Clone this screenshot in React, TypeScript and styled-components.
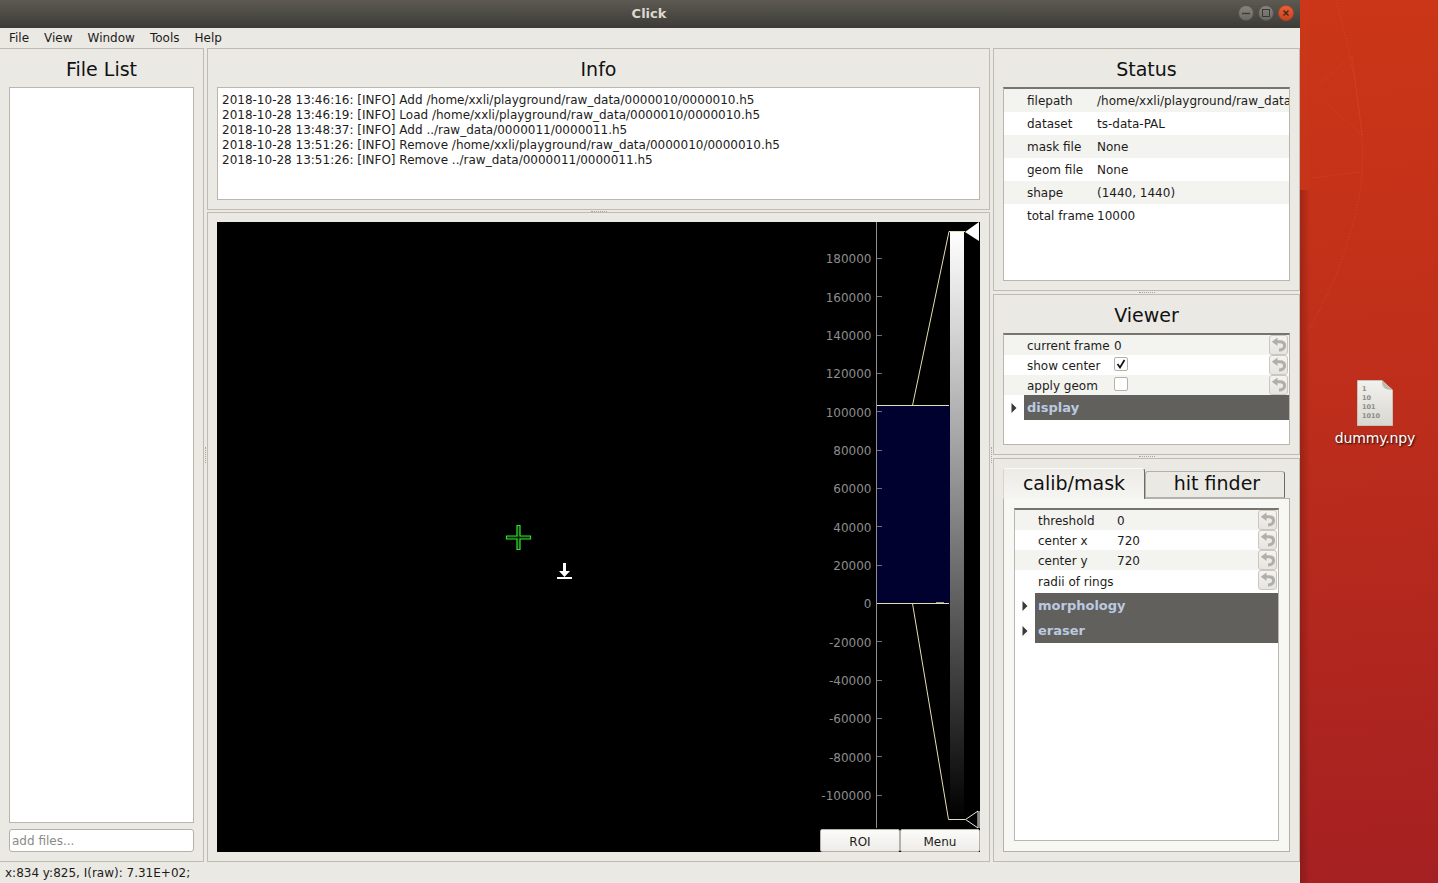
import React from 'react';
import styled, { createGlobalStyle } from 'styled-components';

const GlobalStyle = createGlobalStyle`
  html, body {
    margin: 0;
    padding: 0;
    overflow: hidden;
    font-family: "DejaVu Sans", sans-serif;
    font-size: 12px;
    color: #1d1c1a;
  }
  * { box-sizing: border-box; }
`;

const Page = styled.div`
  display: flex;
  width: 1438px;
  height: 883px;
  overflow: hidden;
  background: linear-gradient(176deg, #cd3816 0%, #c02f1a 45%, #a52022 100%);
`;

const AppWindow = styled.div`
  display: flex;
  flex-direction: column;
  flex: none;
  width: 1300px;
  height: 883px;
  background: #ebe9e4;
`;

const TitleBar = styled.div`
  display: flex;
  align-items: center;
  justify-content: flex-end;
  position: relative;
  flex: none;
  height: 28px;
  padding-right: 6px;
  gap: 4px;
  background: linear-gradient(#5c5a52, #3c3b37);
`;

const TitleText = styled.div`
  position: absolute;
  left: 0;
  right: 0;
  top: 5px;
  padding-right: 2px;
  text-align: center;
  font-size: 13px;
  line-height: 17px;
  font-weight: 700;
  color: #dcd8cf;
`;

const WindowButton = styled.div<{ close?: boolean }>`
  display: flex;
  align-items: center;
  justify-content: center;
  width: 16px;
  height: 16px;
  margin-top: -2px;
  border-radius: 50%;
  border: 1px solid ${({ close }) => (close ? '#b04722' : '#55544e')};
  background: ${({ close }) =>
    close ? 'linear-gradient(#e7623a, #c9421f)' : 'linear-gradient(#85847d, #6a6963)'};
`;

const MenuBar = styled.div`
  display: flex;
  align-items: center;
  flex: none;
  height: 20px;
  padding-left: 2px;
  gap: 1px;
`;

const MenuItem = styled.div`
  padding: 0 7px;
  line-height: 20px;
`;

const Main = styled.div`
  display: flex;
  flex: 1;
  min-height: 0;
`;

const Column = styled.div<{ width: number }>`
  display: flex;
  flex-direction: column;
  flex: none;
  width: ${({ width }) => width}px;
`;

const Dock = styled.div<{ height?: number; flush?: boolean }>`
  display: flex;
  flex-direction: column;
  flex: ${({ height }) => (height ? 'none' : '1')};
  height: ${({ height }) => (height ? `${height}px` : 'auto')};
  min-height: 0;
  padding: 0 9px 9px;
  border: 1px solid #bfbbb2;
  border-left-width: ${({ flush }) => (flush ? 0 : 1)}px;
`;

const DockTitle = styled.div`
  flex: none;
  height: 38px;
  font-size: 19px;
  line-height: 41px;
  text-align: center;
  color: #111;
`;

const FileList = styled.div`
  flex: 1;
  background: #fff;
  border: 1px solid #bab6ad;
`;

const AddFiles = styled.div`
  flex: none;
  height: 23px;
  margin-top: 6px;
  padding-left: 2px;
  line-height: 22px;
  color: #8a8a86;
  background: #fff;
  border: 1px solid #b5b1a8;
  border-radius: 3px;
`;

const LogBox = styled.div`
  flex: 1;
  padding: 5px 4px 0;
  line-height: 15px;
  white-space: pre;
  background: #fff;
  border: 1px solid #bab6ad;
`;

const HSplit = styled.div<{ thick?: boolean }>`
  display: flex;
  justify-content: center;
  align-items: center;
  flex: none;
  height: ${({ thick }) => (thick ? 3 : 2)}px;
`;

const HGrip = styled.div`
  width: 16px;
  border-top: 1px dotted #a8a49b;
`;

const VSplit = styled.div`
  display: flex;
  justify-content: center;
  align-items: center;
  flex: none;
  width: 3px;
`;

const VGrip = styled.div`
  height: 16px;
  border-left: 1px dotted #a8a49b;
`;

const PlotFrame = styled.div`
  position: relative;
  flex: 1;
  margin-top: 9px;
  background: #000;
`;

const PlotSvg = styled.svg`
  display: block;
  width: 763px;
  height: 630px;
`;

const PlotButtons = styled.div`
  display: flex;
  position: absolute;
  right: 0;
  bottom: 0;
`;

const PlotButton = styled.div`
  width: 80px;
  height: 23px;
  line-height: 24px;
  text-align: center;
  background: linear-gradient(#fbfbf9, #eeece8);
  border: 1px solid #b5b1a8;
  border-radius: 2px;
`;

const Tree = styled.div`
  display: flex;
  flex-direction: column;
  flex: 1;
  overflow: hidden;
  background: #fff;
  border: 1px solid #bab6ad;
  border-top: 2px solid #77756f;
`;

const Row = styled.div<{ alt?: boolean; height: number }>`
  display: flex;
  align-items: center;
  position: relative;
  flex: none;
  height: ${({ height }) => height}px;
  padding-left: 23px;
  padding-top: ${({ height }) => (height === 20 ? 1 : 0)}px;
  white-space: nowrap;
  background: ${({ alt }) => (alt ? '#f3f3f0' : '#fff')};
`;

const RowLabel = styled.span<{ width: number }>`
  flex: none;
  width: ${({ width }) => width}px;
`;

const Checkbox = styled.div`
  display: flex;
  align-items: center;
  justify-content: center;
  width: 14px;
  height: 14px;
  margin-top: -3px;
  background: #fff;
  border: 1px solid #b5b1a8;
  border-radius: 2px;
`;

const ResetButton = styled.div`
  display: flex;
  align-items: center;
  justify-content: center;
  position: absolute;
  right: 1px;
  top: 0;
  width: 19px;
  height: 20px;
  padding-bottom: 1px;
  background: linear-gradient(#f4f3f0, #e6e4df);
  border: 1px solid #cac7bf;
  border-radius: 3px;
`;

const GroupRow = styled.div`
  display: flex;
  align-items: center;
  flex: none;
  height: 25px;
`;

const ArrowCell = styled.div`
  display: flex;
  align-items: center;
  justify-content: center;
  flex: none;
  width: 20px;
`;

const GroupLabel = styled.div`
  flex: 1;
  height: 25px;
  padding-left: 3px;
  line-height: 26px;
  font-size: 13px;
  font-weight: 700;
  color: #bacae0;
  background: #62605d;
`;

const TabBar = styled.div`
  display: flex;
  flex: none;
  height: 30px;
  margin-top: 9px;
`;

const Tab = styled.div<{ active?: boolean }>`
  position: relative;
  z-index: ${({ active }) => (active ? 1 : 0)};
  flex: none;
  width: ${({ active }) => (active ? 142 : 140)}px;
  height: ${({ active }) => (active ? 31 : 27)}px;
  margin-top: ${({ active }) => (active ? 0 : 3)}px;
  padding-left: ${({ active }) => (active ? 0 : 4)}px;
  font-size: 19px;
  line-height: ${({ active }) => (active ? 29 : 23)}px;
  text-align: center;
  color: #111;
  background: ${({ active }) => (active ? 'linear-gradient(#edebe6, #f5f5f2)' : '#ebe9e4')};
  border: 1px solid #b5b1a8;
  border-right-color: #6d6b66;
  border-bottom: ${({ active }) => (active ? 'none' : '1px solid #b5b1a8')};
  border-radius: 3px 3px 0 0;
  border-left-color: ${({ active }) => (active ? '#d6d3cb' : '#b5b1a8')};
  border-top-color: ${({ active }) => (active ? '#fbfbf9' : '#b5b1a8')};
`;

const TabPane = styled.div`
  display: flex;
  flex: 1;
  flex-direction: column;
  padding: 9px 10px 10px;
  background: #f7f7f4;
  border: 1px solid #b5b1a8;
`;

const StatusBar = styled.div`
  flex: none;
  height: 21px;
  padding-left: 5px;
  line-height: 23px;
`;

const Desktop = styled.div`
  position: relative;
  flex: 1;
  overflow: hidden;
`;

const DesktopArt = styled.svg`
  position: absolute;
  left: 0;
  top: 0;
  width: 138px;
  height: 883px;
`;

const DesktopIcon = styled.div`
  display: flex;
  flex-direction: column;
  align-items: center;
  position: absolute;
  left: 12px;
  right: 0;
  top: 380px;
`;

const DesktopLabel = styled.div`
  margin-top: 3px;
  font-size: 14px;
  letter-spacing: -0.15px;
  line-height: 18px;
  color: #fff;
  text-shadow: 1px 1px 2px rgba(0, 0, 0, 0.85);
`;

const logLines = [
  '2018-10-28 13:46:16: [INFO] Add /home/xxli/playground/raw_data/0000010/0000010.h5',
  '2018-10-28 13:46:19: [INFO] Load /home/xxli/playground/raw_data/0000010/0000010.h5',
  '2018-10-28 13:48:37: [INFO] Add ../raw_data/0000011/0000011.h5',
  '2018-10-28 13:51:26: [INFO] Remove /home/xxli/playground/raw_data/0000010/0000010.h5',
  '2018-10-28 13:51:26: [INFO] Remove ../raw_data/0000011/0000011.h5',
];

const statusRows = [
  ['filepath', '/home/xxli/playground/raw_data'],
  ['dataset', 'ts-data-PAL'],
  ['mask file', 'None'],
  ['geom file', 'None'],
  ['shape', '(1440, 1440)'],
  ['total frame', '10000'],
];

const ticks = [
  180000, 160000, 140000, 120000, 100000, 80000, 60000, 40000, 20000, 0, -20000, -40000, -60000,
  -80000, -100000,
];

const ResetIcon = () => (
  <svg width="16" height="15" viewBox="0 0 16 15">
    <path
      d="M5 4.8 H9 C12 4.8 13.6 6.6 13.6 8.8 C13.6 11.2 11.4 13 8 13"
      fill="none"
      stroke="#b1afaa"
      strokeWidth="3"
    />
    <path d="M6.5 0.6 L0.8 4.8 L6.5 9 Z" fill="#b1afaa" />
  </svg>
);

const Arrow = () => (
  <svg width="6" height="10" viewBox="0 0 6 10">
    <path d="M0.5 0 L5.5 5 L0.5 10 Z" fill="#3a3936" />
  </svg>
);

const Group = ({ label }: { label: string }) => (
  <GroupRow>
    <ArrowCell>
      <Arrow />
    </ArrowCell>
    <GroupLabel>{label}</GroupLabel>
  </GroupRow>
);

const ParamRow = ({
  label,
  labelWidth,
  alt,
  height = 20,
  children,
}: {
  label: string;
  labelWidth: number;
  alt?: boolean;
  height?: number;
  children?: React.ReactNode;
}) => (
  <Row alt={alt} height={height}>
    <RowLabel width={labelWidth}>{label}</RowLabel>
    {children}
    <ResetButton>
      <ResetIcon />
    </ResetButton>
  </Row>
);

const Plot = () => {
  // the histogram is written in screen coordinates, the panel starts at 217,222
  const yOf = (v: number) => 603.5 - (v / 20000) * 38.33;
  return (
    <PlotFrame>
      <PlotSvg viewBox="217 222 763 630">
        <defs>
          <linearGradient id="lut" x1="0" y1="0" x2="0" y2="1">
            <stop offset="0" stopColor="#ffffff" />
            <stop offset="1" stopColor="#000000" />
          </linearGradient>
        </defs>
        <rect x={877} y={405} width={73} height={198} fill="#01012f" />
        <line x1={876.5} y1={222} x2={876.5} y2={828} stroke="#8f8f8f" />
        {ticks.map((v) => {
          const tickY = Math.floor(yOf(v)) + 0.5;
          return (
            <g key={v}>
              {v !== 0 && <line x1={877} x2={882} y1={tickY} y2={tickY} stroke="#6f6f6f" />}
              <text
                x={871.5}
                y={yOf(v) + 4.7}
                textAnchor="end"
                fontFamily="DejaVu Sans, sans-serif"
                fontSize="12"
                fill="#8d8d8d"
              >
                {v}
              </text>
            </g>
          );
        })}
        <rect x={950} y={232} width={14} height={588} fill="url(#lut)" />
        <g stroke="#e4dfae" fill="none">
          <path d="M877 405.5 H949" />
          <path d="M877 603.5 H949" />
          <path d="M912.5 405.5 L949 231.5 H965" />
          <path d="M912.5 603.5 L948.5 819.5 H965" />
        </g>
        <line x1={936} x2={944} y1={602.5} y2={602.5} stroke="#9a9a90" />
        <path d="M965 232 L979 222 V241 Z" fill="#fff" />
        <path d="M965.5 819.5 L978 811 V828 Z" fill="#000" stroke="#e8e8e8" />
        <rect x={978} y={811} width={2} height={17} fill="#8a8a8a" />
        <path
          d="M506.5 536 H517 V525.5 H520 V536 H530.5 V539 H520 V549.5 H517 V539 H506.5 Z"
          fill="#0a2a0a"
          stroke="#2ee62e"
          strokeWidth="1.2"
        />
        <rect x={563} y={563} width={3} height={9} fill="#fff" />
        <path d="M559 571 H570 L564.5 577 Z" fill="#fff" />
        <rect x={557} y={577} width={15} height={2} fill="#fff" />
      </PlotSvg>
      <PlotButtons>
        <PlotButton>ROI</PlotButton>
        <PlotButton>Menu</PlotButton>
      </PlotButtons>
    </PlotFrame>
  );
};

const App = () => (
  <Page>
    <GlobalStyle />
    <AppWindow>
      <TitleBar>
        <TitleText>Click</TitleText>
        <WindowButton>
          <svg width="10" height="10" viewBox="0 0 10 10">
            <path d="M1 5.5 H9" stroke="#3a3935" strokeWidth="1.3" />
          </svg>
        </WindowButton>
        <WindowButton>
          <svg width="10" height="10" viewBox="0 0 10 10">
            <rect x="1.5" y="1.5" width="7" height="7" fill="none" stroke="#3a3935" />
          </svg>
        </WindowButton>
        <WindowButton close>
          <svg width="10" height="10" viewBox="0 0 10 10">
            <path d="M2.5 2.5 L7.5 7.5 M7.5 2.5 L2.5 7.5" stroke="#4a2216" strokeWidth="1.4" />
          </svg>
        </WindowButton>
      </TitleBar>
      <MenuBar>
        {['File', 'View', 'Window', 'Tools', 'Help'].map((item) => (
          <MenuItem key={item}>{item}</MenuItem>
        ))}
      </MenuBar>
      <Main>
        <Column width={204}>
          <Dock flush>
            <DockTitle>File List</DockTitle>
            <FileList />
            <AddFiles>add files...</AddFiles>
          </Dock>
        </Column>
        <VSplit>
          <VGrip />
        </VSplit>
        <Column width={783}>
          <Dock height={162}>
            <DockTitle>Info</DockTitle>
            <LogBox>{logLines.join('\n')}</LogBox>
          </Dock>
          <HSplit>
            <HGrip />
          </HSplit>
          <Dock>
            <Plot />
          </Dock>
        </Column>
        <VSplit>
          <VGrip />
        </VSplit>
        <Column width={307}>
          <Dock height={243}>
            <DockTitle>Status</DockTitle>
            <Tree>
              {statusRows.map(([label, value], i) => (
                <Row key={label} alt={i % 2 === 0} height={23}>
                  <RowLabel width={70}>{label}</RowLabel>
                  <span>{value}</span>
                </Row>
              ))}
            </Tree>
          </Dock>
          <HSplit thick>
            <HGrip />
          </HSplit>
          <Dock height={161}>
            <DockTitle>Viewer</DockTitle>
            <Tree>
              <ParamRow alt label="current frame" labelWidth={87}>
                <span>0</span>
              </ParamRow>
              <ParamRow label="show center" labelWidth={87}>
                <Checkbox>
                  <svg width="10" height="10" viewBox="0 0 10 10">
                    <path d="M1.5 5 L4 8.5 L8.5 1" fill="none" stroke="#111" strokeWidth="1.7" />
                  </svg>
                </Checkbox>
              </ParamRow>
              <ParamRow alt label="apply geom" labelWidth={87}>
                <Checkbox />
              </ParamRow>
              <Group label="display" />
            </Tree>
          </Dock>
          <HSplit thick>
            <HGrip />
          </HSplit>
          <Dock>
            <TabBar>
              <Tab active>calib/mask</Tab>
              <Tab>hit finder</Tab>
            </TabBar>
            <TabPane>
              <Tree>
                <ParamRow alt label="threshold" labelWidth={79}>
                  <span>0</span>
                </ParamRow>
                <ParamRow label="center x" labelWidth={79}>
                  <span>720</span>
                </ParamRow>
                <ParamRow alt label="center y" labelWidth={79}>
                  <span>720</span>
                </ParamRow>
                <ParamRow label="radii of rings" labelWidth={79} height={23} />
                <Group label="morphology" />
                <Group label="eraser" />
              </Tree>
            </TabPane>
          </Dock>
        </Column>
      </Main>
      <StatusBar>x:834 y:825, I(raw): 7.31E+02;</StatusBar>
    </AppWindow>
    <Desktop>
      <DesktopArt viewBox="0 0 138 883">
        <defs>
          <linearGradient id="edge" x1="0" y1="0" x2="1" y2="0">
            <stop offset="0" stopColor="#5e100c" stopOpacity="0.35" />
            <stop offset="1" stopColor="#5e100c" stopOpacity="0" />
          </linearGradient>
        </defs>
        <rect y="190" width="10" height="693" fill="url(#edge)" />
        <rect width="10" height="190" fill="#d9562b" opacity="0.06" />
        <path
          d="M36 0 Q56 70 62 135 Q64 170 58 203 Q46 255 28 293 Q18 315 7 332 M62 135 L18 96 M62 135 L52 56 L18 85 M60 172 L12 178"
          stroke="#e9794f"
          strokeOpacity="0.3"
          fill="none"
          strokeDasharray="1 2"
        />
      </DesktopArt>
      <DesktopIcon>
        <svg width="36" height="46" viewBox="0 0 36 46">
          <defs>
            <linearGradient id="paper" x1="0" y1="0" x2="0" y2="1">
              <stop offset="0" stopColor="#f2f1ed" />
              <stop offset="1" stopColor="#d8d7d1" />
            </linearGradient>
          </defs>
          <path d="M0.5 0.5 H25 L35.5 10 V45.5 H0.5 Z" fill="url(#paper)" stroke="#c4c2bb" />
          <path d="M25 0.5 C25 6 26 10 35.5 10 Z" fill="#bdbbb4" />
          <g fontFamily="DejaVu Sans, sans-serif" fontSize="6.5" fontWeight="700" fill="#8c8b85">
            <text x="5" y="11">1</text>
            <text x="5" y="20">10</text>
            <text x="5" y="29">101</text>
            <text x="5" y="38">1010</text>
          </g>
        </svg>
        <DesktopLabel>dummy.npy</DesktopLabel>
      </DesktopIcon>
    </Desktop>
  </Page>
);

export default App;
